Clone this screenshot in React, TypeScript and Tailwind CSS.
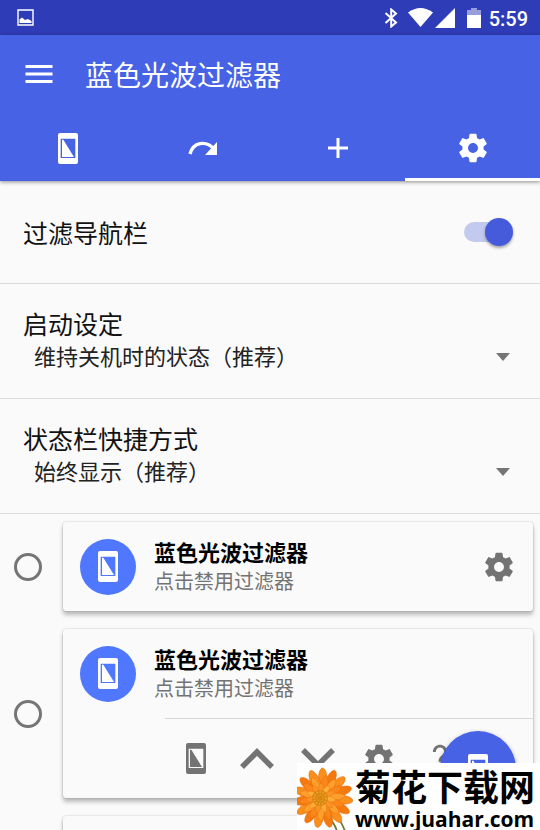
import type { ReactNode } from "react";

const GEAR =
  "M19.43 12.98c.04-.32.07-.64.07-.98s-.03-.66-.07-.98l2.11-1.65c.19-.15.24-.42.12-.64l-2-3.46c-.12-.22-.39-.3-.61-.22l-2.49 1c-.52-.4-1.08-.73-1.69-.98l-.38-2.65C14.46 2.18 14.25 2 14 2h-4c-.25 0-.46.18-.49.42l-.38 2.65c-.61.25-1.17.59-1.69.98l-2.49-1c-.23-.09-.49 0-.61.22l-2 3.46c-.13.22-.07.49.12.64l2.11 1.65c-.04.32-.07.65-.07.98s.03.66.07.98l-2.11 1.65c-.19.15-.24.42-.12.64l2 3.46c.12.22.39.3.61.22l2.49-1c.52.4 1.08.73 1.69.98l.38 2.65c.03.24.24.42.49.42h4c.25 0 .46-.18.49-.42l.38-2.65c.61-.25 1.17-.59 1.69-.98l2.49 1c.23.09.49 0 .61-.22l2-3.46c.12-.22.07-.49-.12-.64l-2.11-1.65zM12 15.5c-1.93 0-3.5-1.57-3.5-3.5s1.57-3.5 3.5-3.5 3.5 1.57 3.5 3.5-1.57 3.5-3.5 3.5z";

function GearIcon() {
  return (
    <svg viewBox="0 0 24 24" className="size-[34px]" fill="currentColor" aria-hidden="true">
      <path d={GEAR} />
    </svg>
  );
}

function PhoneIcon() {
  return (
    <svg viewBox="0 0 60 93" className="h-[31px] w-5" fill="currentColor" aria-hidden="true">
      <path fillRule="evenodd" d="M6 0H54Q60 0 60 6V87Q60 93 54 93H6Q0 93 0 87V6Q0 0 6 0ZM8 17V75H52V17Z" />
      <path d="M12 20H16L48 72H12Z" />
    </svg>
  );
}

function RedoIcon() {
  return (
    <svg viewBox="0 0 30 16" className="h-4 w-[30px]" aria-hidden="true">
      <path d="M2 14C5 2 18 0 26 9" fill="none" stroke="currentColor" strokeWidth="3.400" />
      <path d="M29 2V15H17Z" fill="currentColor" />
    </svg>
  );
}

function PlusIcon() {
  return (
    <svg viewBox="0 0 20 20" className="size-5" aria-hidden="true">
      <path d="M10 0V20M0 10H20" stroke="currentColor" strokeWidth="3" />
    </svg>
  );
}

function Chevron({ down = false }: { down?: boolean }) {
  return (
    <svg viewBox="0 0 34 34" className="size-[34px]" aria-hidden="true">
      <path d={down ? "M2 8L17 23L32 8" : "M2 25L17 10L32 25"} fill="none" stroke="currentColor" strokeWidth="5.500" />
    </svg>
  );
}

function HelpIcon() {
  return (
    <svg viewBox="0 0 24 24" className="size-[34px]" fill="currentColor" aria-hidden="true">
      <path d="M11 18h2v-2h-2v2zm1-16c-2.2 0-5 1.600-5 5h2c0-1.900 1.400-3.200 3-3.200s3 1.300 3 3.200c0 2-4 2.500-4 7h2c0-3.200 4-3.700 4-7 0-3.400-2.800-5-5-5z" />
    </svg>
  );
}

function StatusBar() {
  return (
    <div className="flex h-[35px] items-center justify-between bg-[#2f3cb8] pr-3 pl-[17px]">
      <svg viewBox="0 0 17 17" className="size-[17px]" aria-label="图片">
        <path d="M1 1H16V16H1Z" fill="none" stroke="white" strokeWidth="1.400" />
        <path d="M2.500 14V10.500L5 8.500L8 11L11 10L14.500 12V14Z" fill="white" />
      </svg>
      <div className="flex items-center text-white">
        <svg viewBox="0 0 14 20" className="mr-2.5 h-5 w-3.5" fill="none" stroke="white" strokeWidth="2" aria-label="蓝牙">
          <path d="M1.500 5L12 14.500L7.200 18.500V1.500L12 5.500L1.500 15" />
        </svg>
        <svg viewBox="0 0 25 19" className="mr-0.5 h-[19px] w-[25px]" fill="white" aria-label="无线网络">
          <path d="M0 4.500Q12.500 -4.500 25 4.500L12.500 19Z" />
        </svg>
        <svg viewBox="0 0 20 20" className="mr-3 size-5" fill="white" aria-label="信号">
          <path d="M20 0V20H0Z" />
        </svg>
        <svg viewBox="0 0 14 20" className="mr-2 h-5 w-3.5" fill="white" aria-label="电池">
          <path d="M0 2H4V0H10V2H14V7H0Z" opacity=".5" />
          <path d="M0 7H14V20H0Z" />
        </svg>
        <span className="pt-0.5 font-[Roboto] text-[20px] leading-6 font-medium">5:59</span>
      </div>
    </div>
  );
}

function Tab({ label, active = false, children }: { label: string; active?: boolean; children: ReactNode }) {
  return (
    <button
      type="button"
      role="tab"
      aria-selected={active}
      aria-label={label}
      className={`flex h-[69px] items-center justify-center border-b-3 pt-1.5 ${active ? "border-white" : "border-transparent"}`}
    >
      {children}
    </button>
  );
}

function SelectRow({ id, title, options }: { id: string; title: string; options: string[] }) {
  return (
    <div className="border-b border-[#dcdcdc] px-[23px] pt-[23px] pb-[25px]">
      <label htmlFor={id} className="block text-[25px] leading-[33px]">
        {title}
      </label>
      <div className="grid items-center">
        <select
          id={id}
          className="col-start-1 row-start-1 h-[33px] w-full appearance-none bg-transparent pb-1 pl-[11px] text-[22px] leading-7 text-[#222]"
        >
          {options.map((o) => (
            <option key={o}>{o}</option>
          ))}
        </select>
        <svg
          viewBox="0 0 14 8"
          className="pointer-events-none col-start-1 row-start-1 mr-[7px] h-2 w-3.5 justify-self-end"
          aria-hidden="true"
        >
          <path d="M0 0H14L7 8Z" fill="#757575" />
        </svg>
      </div>
    </div>
  );
}

function CardHead({ action }: { action?: ReactNode }) {
  return (
    <div className="flex h-[89px] items-center px-[17px]">
      <span className="flex size-14 items-center justify-center rounded-full bg-[#5077ff] text-white">
        <PhoneIcon />
      </span>
      <div className="ml-[18px] flex-1 pb-0.5">
        <div className="text-[22px] leading-[30px] font-bold text-black">蓝色光波过滤器</div>
        <div className="text-[20px] leading-[30px] text-[#737373]">点击禁用过滤器</div>
      </div>
      {action}
    </div>
  );
}

function Choice({ label, children }: { label: string; children: ReactNode }) {
  return (
    <div className="flex items-center pr-[7px] pl-3.5">
      <input
        type="radio"
        name="layout"
        aria-label={label}
        className="size-7 shrink-0 appearance-none rounded-full border-3 border-[#757575] checked:bg-[#4560e4]"
      />
      <div className="ml-[21px] min-w-0 flex-1 rounded-[3px] bg-[#fafafa] shadow-[0_0_2px_rgba(0,0,0,0.25),0_4px_4px_rgba(0,0,0,0.25)]">
        {children}
      </div>
    </div>
  );
}

const BACK = [0, 24, 47, 71, 96, 120, 144, 167, 192, 216, 240, 263, 288, 312, 336];
const MIDDLE = [10, 36, 59, 85, 110, 133, 160, 184, 209, 233, 260, 285, 308, 335];
const FRONT = [0, 33, 64, 98, 130, 163, 196, 228, 262, 294, 327];

function Flower() {
  return (
    <svg viewBox="0 0 56 67" className="h-[67px] w-14 shrink-0" aria-hidden="true">
      <path d="M31 54Q37 59 40 68M39 52Q44 58 48 68" fill="none" stroke="#6f7a35" strokeWidth="1.800" />
      {BACK.map((a, i) => (
        <path
          key={a}
          d="M26 35C20 22 20 8 25 5C30 4 33 20 26 35Z"
          transform={`rotate(${a} 26 35)`}
          fill={i % 2 ? "#f47a10" : "#fb8f1c"}
          stroke="#e06a0a"
          strokeWidth=".5"
        />
      ))}
      {MIDDLE.map((a, i) => (
        <path
          key={a}
          d="M25 35C20 26 21 14 25 12C29 14 30 26 25 35Z"
          transform={`rotate(${a} 25 35)`}
          fill={i % 2 ? "#ff9f2c" : "#fb861a"}
          stroke="#e8700c"
          strokeWidth=".5"
        />
      ))}
      {FRONT.map((a, i) => (
        <path
          key={a}
          d="M24 35C20 29 21 22 24 20C27 22 28 29 24 35Z"
          transform={`rotate(${a} 24 35)`}
          fill={i % 2 ? "#ffad3b" : "#fd9324"}
          stroke="#e5720e"
          strokeWidth=".4"
        />
      ))}
      <circle cx="23" cy="35" r="8" fill="#d9850f" />
      <circle cx="23" cy="35" r="6" fill="none" stroke="#eca528" strokeWidth="2" strokeDasharray="1.500 1.500" />
      <circle cx="23" cy="35" r="3" fill="none" stroke="#e89d22" strokeWidth="1.500" strokeDasharray="1 1" />
    </svg>
  );
}

export default function App() {
  return (
    <div className="relative h-screen overflow-hidden bg-[#fafafa] font-['Noto_Sans_CJK_SC',sans-serif] text-[#111]">
      <StatusBar />
      <header className="relative bg-[#4762e5] text-white shadow-[0_1px_4px_rgba(0,0,0,0.45)]">
        <div className="flex h-[77px] items-center pl-[21px]">
          <button type="button" aria-label="菜单">
            <svg viewBox="0 0 24 24" className="size-9" fill="currentColor" aria-hidden="true">
              <path d="M3 18h18v-2H3v2zm0-5h18v-2H3v2zm0-7v2h18V6H3z" />
            </svg>
          </button>
          <h1 className="ml-7 text-[28px] leading-9">蓝色光波过滤器</h1>
        </div>
        <div role="tablist" className="grid grid-cols-4">
          <Tab label="过滤器">
            <PhoneIcon />
          </Tab>
          <Tab label="快捷">
            <RedoIcon />
          </Tab>
          <Tab label="添加">
            <PlusIcon />
          </Tab>
          <Tab label="设置" active>
            <GearIcon />
          </Tab>
        </div>
      </header>

      <main>
        <div className="flex h-[103px] items-center justify-between border-b border-[#dcdcdc] pr-[27px] pl-[23px]">
          <label htmlFor="navbar" className="text-[25px] leading-[33px]">
            过滤导航栏
          </label>
          <span className="grid w-[49px] items-center">
            <input
              id="navbar"
              type="checkbox"
              role="switch"
              defaultChecked
              className="peer col-start-1 row-start-1 h-5 w-10 appearance-none rounded-full bg-[#c3caf0]"
            />
            <span className="pointer-events-none col-start-1 row-start-1 size-7 rounded-full bg-[#455bdc] shadow-[0_2px_3px_rgba(0,0,0,0.35)] peer-checked:justify-self-end" />
          </span>
        </div>
        <SelectRow id="startup" title="启动设定" options={["维持关机时的状态（推荐）"]} />
        <SelectRow id="shortcut" title="状态栏快捷方式" options={["始终显示（推荐）"]} />

        <div className="flex flex-col gap-[18px] pt-2">
          <Choice label="简洁">
            <CardHead
              action={
                <button type="button" aria-label="设置" className="text-[#737373]">
                  <GearIcon />
                </button>
              }
            />
          </Choice>
          <Choice label="完整">
            <CardHead />
            <div className="ml-[102px] flex h-20 items-center gap-[27px] border-t border-[#d8d8d8] pl-[14px] text-[#737373]">
              <button type="button" aria-label="过滤器" className="flex w-[34px] justify-center">
                <PhoneIcon />
              </button>
              <button type="button" aria-label="增加">
                <Chevron />
              </button>
              <button type="button" aria-label="减少">
                <Chevron down />
              </button>
              <button type="button" aria-label="设置">
                <GearIcon />
              </button>
              <button type="button" aria-label="帮助">
                <HelpIcon />
              </button>
            </div>
          </Choice>
          <Choice label="图标">
            <div className="h-[89px]" />
          </Choice>
        </div>
      </main>

      <button
        type="button"
        aria-label="开关过滤器"
        className="absolute right-6 bottom-[23px] flex size-[76px] items-center justify-center rounded-full bg-[#4762e5] text-white shadow-[0_2px_5px_rgba(0,0,0,0.35)]"
      >
        <PhoneIcon />
      </button>

      <div className="absolute right-0 bottom-0 flex h-[67px] w-[243px] bg-white text-black">
        <Flower />
        <div className="pt-1.5 pl-0.5 whitespace-nowrap">
          <div className="font-['Liberation_Sans','Noto_Sans_CJK_SC',sans-serif] text-[36px] leading-10 font-bold">
            菊花下载网
          </div>
          <div className="font-['Open_Sans',sans-serif] text-[21px] leading-5 font-bold">www.juahar.com</div>
        </div>
      </div>
    </div>
  );
}
